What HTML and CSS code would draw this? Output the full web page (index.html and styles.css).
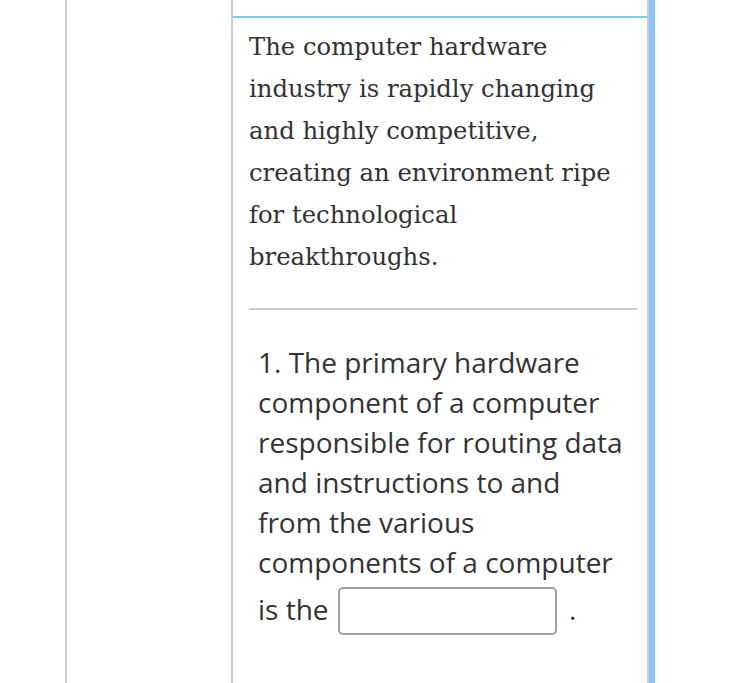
FILE: index.html
```html
<!DOCTYPE html>
<html>
<head>
<meta charset="utf-8">
<link rel="stylesheet" href="styles.css">
</head>
<body>
<div class="page">
  <div class="gutter"></div>
  <div class="side"></div>
  <div class="main">
    <div class="panel">
      <p class="passage">The computer hardware industry is rapidly changing and highly competitive, creating an environment ripe for technological breakthroughs.</p>
      <hr class="sep">
      <p class="question">1. The primary hardware component of a computer responsible for routing data and instructions to and from the various components of a computer is the <span class="blank"></span> .</p>
    </div>
  </div>
  <div class="bar"></div>
</div>
</body>
</html>
```
FILE: styles.css
```css
html, body { margin: 0; padding: 0; background: #fff; }
.page { display: flex; height: 683px; overflow: hidden; }
.gutter { width: 65px; flex: none; }
.side { width: 164px; flex: none; border-left: 2px solid #cccccc; }
.main { width: 414px; flex: none; border-left: 2px solid #cccccc; border-right: 2px solid #cccccc; padding-top: 16px; }
.bar { width: 6px; flex: none; background: #8cc3ff; }
.panel { border-top: 2px solid #7fcbe2; padding: 0 10px 0 16px; }
.passage { margin: 8px 0 0; padding-right: 18px; font-family: "DejaVu Serif", serif; font-size: 24.3px; line-height: 42px; color: #333; }
.sep { border: 0; border-top: 2px solid #cccccc; margin: 30px 0 0; }
.question { margin: 32px 0 0; padding: 0 11px 0 9px; font-family: "Open Sans", sans-serif; font-size: 28px; line-height: 40px; color: #333; }
.blank { display: inline-block; box-sizing: border-box; width: 219px; height: 48px; border: 2px solid #a0a0a0; border-radius: 5px; vertical-align: -15px; margin: 5px 5px 0 2px; }
```
